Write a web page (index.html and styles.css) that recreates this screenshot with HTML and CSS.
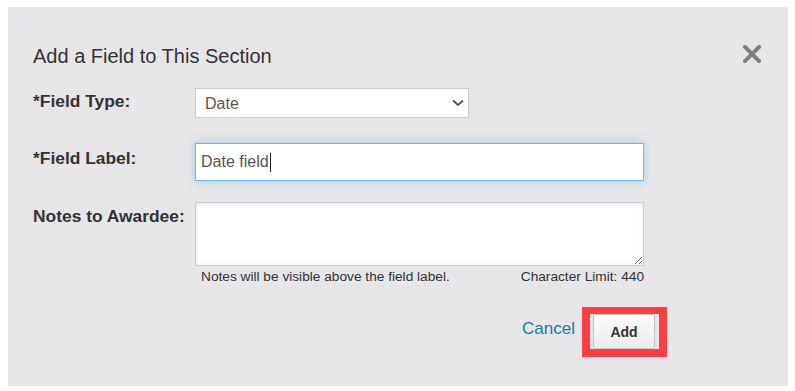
FILE: index.html
```html
<!DOCTYPE html>
<html lang="en">

<head>
    <meta charset="UTF-8">
    <meta name="viewport" content="width=device-width, initial-scale=1.0">
    <title>Add a Field</title>
    <link rel="stylesheet" href="styles.css">
</head>

<body>
    <div class="modal">
        <div class="modal-header">
            <h2>Add a Field to This Section</h2>
            <svg class="close" width="18" height="18" viewBox="0 0 18 18">
                <path d="M2 2 L16 16 M16 2 L2 16" stroke="#808080" stroke-width="4" stroke-linecap="square" />
            </svg>
        </div>

        <form class="field-form">
            <div class="form-row row-type">
                <label for="fieldType">*Field Type:</label>
                <div class="select-wrap">
                    <select id="fieldType" name="fieldType">
                        <option>Date</option>
                        <option>Text</option>
                        <option>Number</option>
                    </select>
                    <svg class="chevron" width="12" height="8" viewBox="0 0 12 8">
                        <path d="M1 1.5 L6 6 L11 1.5" fill="none" stroke="#555" stroke-width="2" />
                    </svg>
                </div>
            </div>

            <div class="form-row row-label">
                <label>*Field Label:</label>
                <div class="text-input focused">Date field<span class="caret"></span></div>
            </div>

            <div class="form-row row-notes">
                <label for="notes">Notes to Awardee:</label>
                <textarea id="notes" name="notes"></textarea>
            </div>

            <div class="form-row">
                <span></span>
                <div class="hint">
                    <span>Notes will be visible above the field label.</span>
                    <span>Character Limit: 440</span>
                </div>
            </div>

            <div class="actions">
                <a href="#" class="cancel">Cancel</a>
                <span class="highlight">
                    <button type="button">Add</button>
                </span>
            </div>
        </form>
    </div>
</body>

</html>
```

FILE: styles.css
```css
body {
    font-family: "Liberation Sans", Arial, sans-serif;
    background-color: #fff;
    margin: 0;
    padding: 7px 0 0 8px;
}

.modal {
    width: 780px;
    height: 379px;
    box-sizing: border-box;
    background-color: #e6e6e8;
    padding: 38px 27px 0 25px;
}

.modal-header {
    display: flex;
    justify-content: space-between;
    align-items: flex-start;
}

.modal-header h2 {
    margin: 0;
    font-size: 20px;
    line-height: 23px;
    font-weight: normal;
    color: #333;
}

.close {
    display: block;
}

.field-form {
    width: 634px;
    margin-top: 20px;
}

.form-row {
    display: grid;
    grid-template-columns: 162px 449px;
}

.form-row label {
    font-weight: bold;
    font-size: 17.4px;
    line-height: 20px;
    color: #333;
    padding-top: 4px;
}

.row-type {
    margin-bottom: 25px;
}

.row-type label {
    padding-top: 3px;
}

.row-label {
    margin-bottom: 21px;
}

.row-label label {
    padding-top: 5px;
}

.select-wrap {
    position: relative;
    width: 274px;
}

.select-wrap select {
    display: block;
    width: 274px;
    height: 30px;
    box-sizing: border-box;
    border: 1px solid #ccc;
    border-radius: 0;
    background-color: #fff;
    padding: 0 9px;
    font-family: inherit;
    font-size: 16px;
    color: #555;
    appearance: none;
    -webkit-appearance: none;
}

.chevron {
    position: absolute;
    right: 5px;
    top: 11px;
    pointer-events: none;
}

.text-input {
    display: flex;
    align-items: center;
    height: 38px;
    box-sizing: border-box;
    background-color: #fff;
    border: 1px solid #76b5ea;
    padding: 0 5px;
    font-size: 16px;
    color: #555;
}

.text-input.focused {
    box-shadow: 0 0 8px rgba(102, 175, 233, 0.55);
}

.caret {
    display: inline-block;
    width: 1px;
    height: 19px;
    margin-left: 1px;
    background-color: #222;
}

textarea {
    display: block;
    width: 449px;
    height: 64px;
    box-sizing: border-box;
    border: 1px solid #ccc;
    background-color: #fff;
    box-shadow: inset 0 1px 5px rgba(0, 0, 0, 0.12);
    font-family: inherit;
    font-size: 14px;
    margin: 0;
}

.hint {
    display: flex;
    justify-content: space-between;
    margin-top: 3px;
    padding-left: 6px;
    font-size: 13.7px;
    line-height: 16px;
    color: #333;
}

.actions {
    display: flex;
    justify-content: flex-end;
    align-items: center;
    margin-top: 22px;
}

.cancel {
    font-size: 17px;
    color: #1b7ba0;
    text-decoration: none;
    margin-right: 7px;
    padding-bottom: 6px;
}

.highlight {
    display: flex;
    border: 8px solid #fd3f45;
    border-top-width: 7px;
    padding: 0 4px 0 3px;
}

.highlight button {
    width: 62px;
    height: 35px;
    border: 1px solid #c4c4c4;
    border-radius: 2px;
    background: linear-gradient(#fbfbfb, #ebebeb);
    font-family: inherit;
    font-weight: bold;
    font-size: 14px;
    color: #333;
    cursor: pointer;
}
```
